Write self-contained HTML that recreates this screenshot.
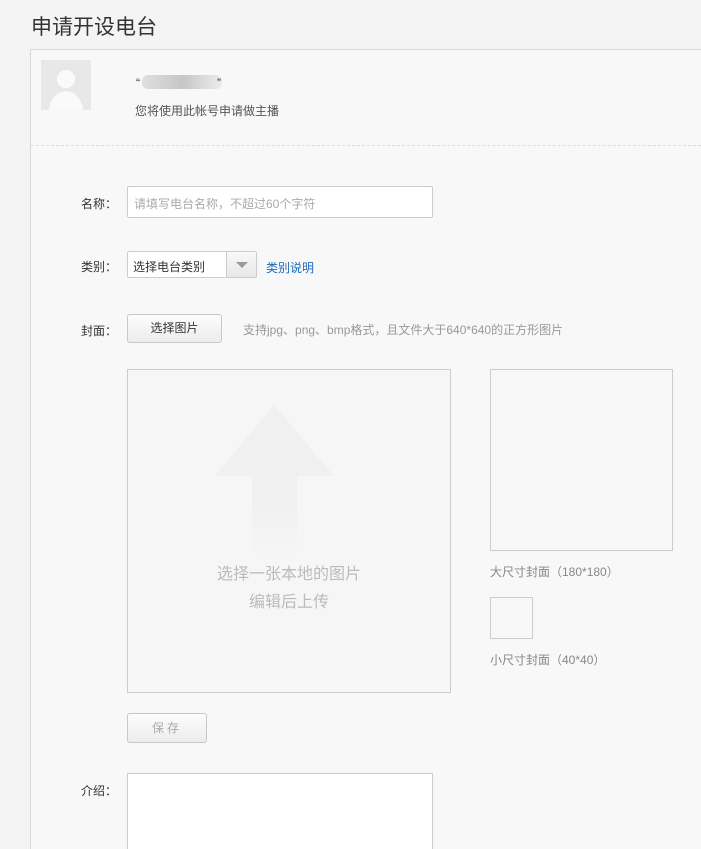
<!DOCTYPE html>
<html><head><meta charset="utf-8"><style>
*{margin:0;padding:0;box-sizing:border-box}
html,body{width:701px;height:849px;overflow:hidden}
body{background:#f4f4f4;font-family:"Liberation Sans","Noto Sans CJK SC",sans-serif;font-size:12px;color:#333;position:relative}
.a{position:absolute}
h1{position:absolute;left:31px;top:11px;font-size:21px;font-weight:normal;color:#333}
.box{left:30px;top:49px;width:700px;height:820px;border:1px solid #d8d8d8;background:#f8f8f8}
.lbl{width:60px;text-align:right;left:57px;color:#333}
.inp{border:1px solid #ccc;background:#fff;border-radius:2px}
.btn{border:1px solid #c8c8c8;border-radius:3px;background:linear-gradient(#fdfdfd,#ececec);text-align:center;color:#333}
</style></head><body>
<h1>申请开设电台</h1>
<div class="a box"></div>
<div class="a" style="left:41px;top:60px;width:50px;height:50px;background:#e8e8e8;overflow:hidden">
<svg width="50" height="50"><circle cx="25" cy="19" r="9" fill="#fafafa"/><path d="M8 50 Q10 33 25 31 Q40 33 42 50Z" fill="#fafafa"/></svg></div>
<div class="a" style="left:136px;top:76px;color:#333">“</div>
<div class="a" style="left:142px;top:75px;width:80px;height:14px;background:linear-gradient(90deg,#e0e0e0,#c6c6c6 50%,#ececec);border-radius:6px"></div>
<div class="a" style="left:217px;top:76px">”</div>
<div class="a" style="left:135px;top:102px;color:#555">您将使用此帐号申请做主播</div>
<div class="a" style="left:31px;top:145px;width:670px;border-top:1px dashed #ddd"></div>

<div class="a lbl" style="top:195px">名称：</div>
<div class="a inp" style="left:127px;top:186px;width:306px;height:32px;padding:8px 6px;color:#aaa">请填写电台名称，不超过60个字符</div>

<div class="a lbl" style="top:258px">类别：</div>
<div class="a inp" style="left:127px;top:251px;width:130px;height:27px;padding:6px 5px;color:#333">选择电台类别</div>
<div class="a" style="left:226px;top:252px;width:30px;height:25px;border-left:1px solid #ccc;background:linear-gradient(#f8f8f8,#e8e8e8)"><div class="a" style="left:9px;top:10px;border:6px solid transparent;border-top:6px solid #999;border-bottom:0"></div></div>
<div class="a" style="left:266px;top:259px;color:#1a6ab8">类别说明</div>

<div class="a lbl" style="top:322px">封面：</div>
<div class="a btn" style="left:127px;top:314px;width:95px;height:29px;line-height:27px">选择图片</div>
<div class="a" style="left:243px;top:321px;color:#999">支持jpg、png、bmp格式，且文件大于640*640的正方形图片</div>

<div class="a" style="left:127px;top:369px;width:324px;height:324px;border:1px solid #ccc;background:#f6f6f6"></div>
<svg class="a" style="left:127px;top:369px" width="324" height="324"><defs><linearGradient id="g" x1="0" y1="0" x2="0" y2="1"><stop offset="0" stop-color="#f0f0f0"/><stop offset="0.6" stop-color="#f0f0f0"/><stop offset="1" stop-color="#f6f6f6"/></linearGradient></defs><path d="M147 36 L207 107 L170 107 L170 192 L125 192 L125 107 L88 107Z" fill="url(#g)"/></svg>
<div class="a" style="left:127px;top:561px;width:324px;text-align:center;font-size:16px;line-height:28px;color:#bbb">选择一张本地的图片<br>编辑后上传</div>

<div class="a" style="left:490px;top:369px;width:183px;height:182px;border:1px solid #ccc;background:#f8f8f8"></div>
<div class="a" style="left:490px;top:563px;color:#888">大尺寸封面（180*180）</div>
<div class="a" style="left:490px;top:597px;width:43px;height:42px;border:1px solid #ccc"></div>
<div class="a" style="left:490px;top:651px;color:#888">小尺寸封面（40*40）</div>

<div class="a btn" style="left:127px;top:713px;width:80px;height:30px;line-height:28px;color:#aaa;letter-spacing:3px">保存</div>

<div class="a lbl" style="top:782px">介绍：</div>
<div class="a inp" style="left:127px;top:773px;width:306px;height:100px;border-radius:0"></div>
</body></html>
